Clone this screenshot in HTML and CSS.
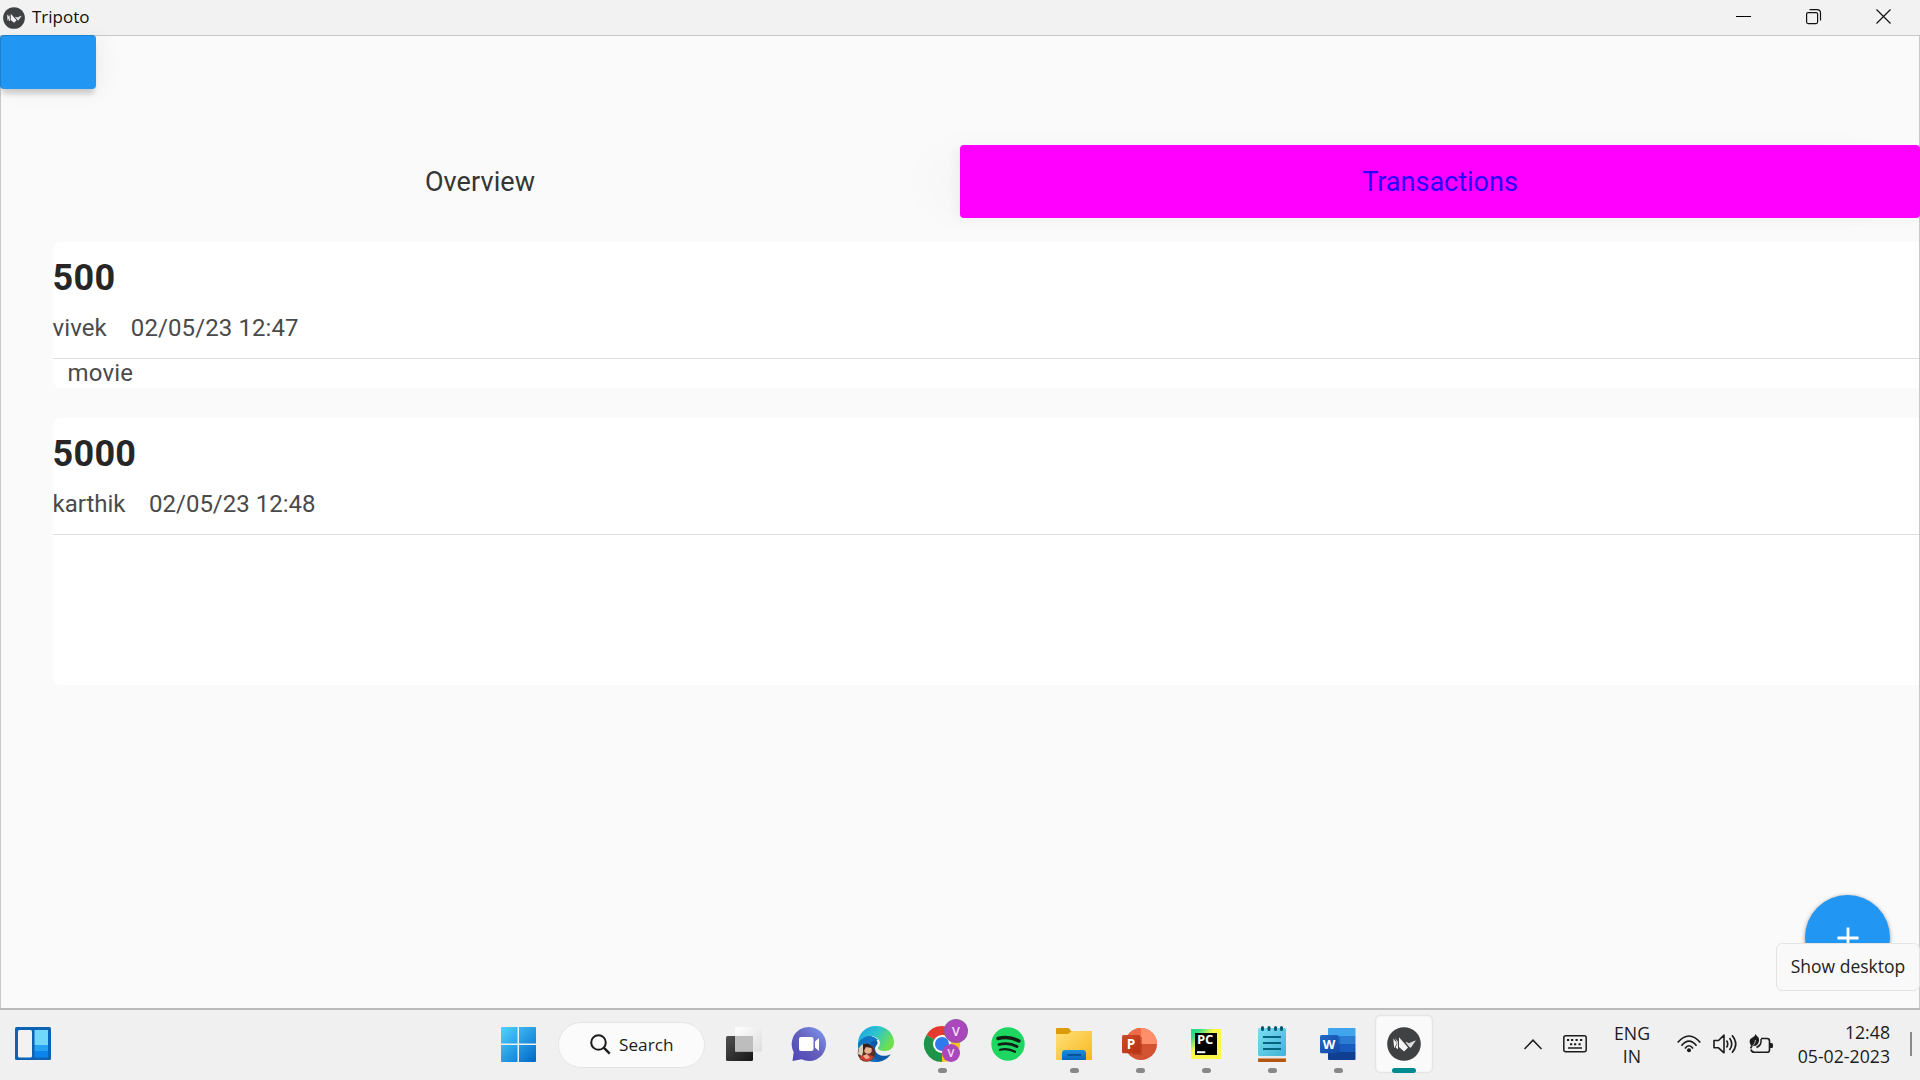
FILE: index.html
```html
<!DOCTYPE html>
<html lang="en">
<head>
<meta charset="utf-8">
<title>Tripoto</title>
<link rel="stylesheet" href="styles.css">
</head>
<body>
<svg width="0" height="0" class="defs">
  <defs>
    <symbol id="kivy" viewBox="0 0 34 34">
      <circle cx="17" cy="17" r="16.8" fill="#404143"/>
      <path d="M6.2 11.5L10 16l-2.8 5.2zM8 11l2.8 3.6.2 7.6-2.4-1.6 1.7-4.4zM12 10.3l9 10.2-3.9 4-5.1-4.6zM18.600 15l3.400 1.200 6.800-2.700-5.100 7.200-1.200-.8z" fill="#f4f4f4"/>
      <path d="M18.600 15l3.400 1.200 6.800-2.700-6.300 6.400z" fill="#d5d5d5"/>
    </symbol>
    <linearGradient id="win" x1="0" y1="0" x2="1" y2="1"><stop offset="0" stop-color="#4fd3ff"/><stop offset="1" stop-color="#0067c8"/></linearGradient>
    <linearGradient id="dark" x1="0" y1="0" x2="1" y2="1"><stop offset="0" stop-color="#505050"/><stop offset="1" stop-color="#161616"/></linearGradient>
    <linearGradient id="light" x1="0" y1="0" x2="1" y2="1"><stop offset="0" stop-color="#ffffff"/><stop offset="1" stop-color="#dedede"/></linearGradient>
    <linearGradient id="chat" x1="0" y1="1" x2="1" y2="0"><stop offset="0" stop-color="#4a45b5"/><stop offset=".5" stop-color="#6660bd"/><stop offset="1" stop-color="#7f9df5"/></linearGradient>
    <linearGradient id="edgeTop" x1="0" y1="0" x2="1" y2=".5"><stop offset="0" stop-color="#1b9de2"/><stop offset=".5" stop-color="#2bc3d2"/><stop offset="1" stop-color="#6fe04c"/></linearGradient>
    <linearGradient id="folder" x1="0" y1="0" x2="1" y2="1"><stop offset="0" stop-color="#ffe07a"/><stop offset="1" stop-color="#f8b81e"/></linearGradient>
    <linearGradient id="blue" x1="0" y1="0" x2="0" y2="1"><stop offset="0" stop-color="#1c8fe0"/><stop offset="1" stop-color="#0b66bd"/></linearGradient>
    <linearGradient id="red" x1="0" y1="0" x2="1" y2="1"><stop offset="0" stop-color="#ce4a2b"/><stop offset="1" stop-color="#b5310f"/></linearGradient>
    <linearGradient id="pc" x1="0" y1="0" x2="1" y2="1"><stop offset="0" stop-color="#21d789"/><stop offset=".16" stop-color="#35dc86"/><stop offset=".4" stop-color="#fcf84a"/><stop offset="1" stop-color="#fcf84a"/></linearGradient>
    <linearGradient id="note" x1="0" y1="0" x2="1" y2="1"><stop offset="0" stop-color="#7fdcf5"/><stop offset="1" stop-color="#3fb4d4"/></linearGradient>
    <linearGradient id="word" x1="0" y1="0" x2="1" y2="1"><stop offset="0" stop-color="#2368c9"/><stop offset="1" stop-color="#1149a5"/></linearGradient>
  </defs>
</svg>

<header class="titlebar">
  <svg class="app-icon" width="22" height="22"><use href="#kivy"/></svg>
  <span class="app-name">Tripoto</span>
  <div class="window-controls">
    <svg width="16" height="16"><path d="M0 7.500h15" stroke="#000"/></svg>
    <svg width="16" height="16" fill="none" stroke="#111" stroke-width="1.200"><rect x=".6" y="3.600" width="11" height="11" rx="1.500"/><path d="M3.500.6H11Q14.500.6 14.500 4v7.500"/></svg>
    <svg width="16" height="16"><path d="M.5.5l14 14M14.500.5l-14 14" stroke="#111" stroke-width="1.200"/></svg>
  </div>
</header>

<main class="window">
  <button class="menu-button" aria-label="Menu"></button>
  <nav class="tabs">
    <button class="tab">Overview</button>
    <button class="tab active">Transactions</button>
  </nav>
  <section class="transactions">
    <article class="card">
      <h2 class="amount">500</h2>
      <p class="meta"><span>vivek</span><span>02/05/23 12:47</span></p>
      <p class="note">movie</p>
    </article>
    <article class="card tall">
      <h2 class="amount">5000</h2>
      <p class="meta"><span>karthik</span><span>02/05/23 12:48</span></p>
      <p class="note"></p>
    </article>
  </section>
  <button class="fab" aria-label="Add"><svg width="22" height="22"><path d="M11 .5v21M.5 11h21" stroke="#fff" stroke-width="2.800"/></svg></button>
  <div class="tooltip">Show desktop</div>
</main>

<footer class="taskbar">
  <div class="widgets">
    <svg width="36" height="34"><rect width="36" height="33" rx="1.500" fill="#0d62b3"/><rect x="3" y="3" width="14" height="27.500" rx="1.500" fill="#f2f2f2"/><path d="M19.500 3H33v15H19.500z" fill="#6fd8fb"/><path d="M19.500 18H33v6H19.500z" fill="#25a2f1"/><path d="M19.500 24H33v6.500H19.500z" fill="#0c83ea"/></svg>
  </div>
  <div class="apps">
    <svg class="start" width="35" height="35" fill="url(#win)"><path d="M1 0h15.500v16.500H0V1q0-1 1-1zM18 0h16q1 0 1 1v15.500H18zM0 18h16.500v17H1q-1 0-1-1zM18 18h17v16q0 1-1 1H18z"/></svg>
    <div class="search">
      <svg width="21" height="21" fill="none" stroke="#1c1c1c" stroke-width="2"><circle cx="8.500" cy="8.500" r="7.300"/><path d="M13.700 13.700l6 6" stroke-width="2.400"/></svg>
      <span>Search</span>
    </div>
    <svg class="app" viewBox="0 0 66 70"><rect x="15" y="26" width="27" height="25" rx="1.500" fill="url(#dark)"/><rect x="24" y="17" width="27" height="24.500" rx="1" fill="url(#light)"/><path d="M24 26h18v15.500H24z" fill="#bdbdbd"/></svg>
    <svg class="app" viewBox="0 0 66 70"><path d="M32 17a17 17 0 1 1-7.500 32.200L15.500 51l1.200-9A17 17 0 0 1 32 17z" fill="url(#chat)"/><rect x="22" y="27" width="14.500" height="14" rx="2" fill="#fff"/><path d="M38 31.500l4-3.500v13l-4-3.500z" fill="#fff"/></svg>
    <svg class="app" viewBox="0 0 66 70">
      <path d="M15 34a18 18 0 0 0 33 10c-4 3-15 3-16-5 0-4 4-4 2-8C31 24 18 24 15 34z" fill="#0d5ba8"/>
      <path d="M15 34C15 23 23 16 33 16c11 0 18 8 18 16 0 6-4 9-9 9-4 0-7-1-7-3 0-1 2-2 2-5 0-3-4-7-9-7-6 0-10 3-13 8z" fill="url(#edgeTop)"/>
      <path d="M15 34c3-8 15-10 20-4-6-1-10 5-8 11 1 4 4 8 8 10-12 3-20-7-20-17z" fill="#1275c4"/>
      <circle cx="23.500" cy="43" r="8.800" fill="#5b302b"/>
      <path d="M16 38q3-5 8-4l-3 4-2 8-4-2z" fill="#d7cdb6"/><circle cx="25" cy="40" r="3.800" fill="#e7b18e"/><path d="M20 34q7-2 9 4l-6-1-3 5z" fill="#38201d"/><path d="M16.500 47q7-5 14.500 0a8.800 8.800 0 0 1-13 2z" fill="#d33c30"/><path d="M20 46l4-2 3 4-4 1z" fill="#efb092"/>
    </svg>
    <svg class="app" viewBox="0 0 66 70">
      <path d="M33 34L17.400 25a18 18 0 0 1 31.200 0z" fill="#e33b2e"/><path d="M33 34l-15.600-9A18 18 0 0 0 33 52l6-9z" fill="#1f9347"/><path d="M33 34v18a18 18 0 0 0 15.600-27H33z" fill="#fdc21b"/>
      <circle cx="33" cy="34" r="9" fill="#fff"/><circle cx="33" cy="34" r="7" fill="#2f7bed"/>
      <circle cx="47" cy="21" r="12" fill="#8d5aa0"/><circle cx="47" cy="21" r="11" fill="#ab47bc"/><text x="47" y="25.500" class="glyph soft" font-size="12.500">V</text>
      <circle cx="42" cy="43" r="9" fill="#ab47bc"/><text x="42" y="47" class="glyph soft" font-size="11">V</text>
      <rect x="29" y="58" width="9" height="5" rx="2.500" fill="#888"/>
    </svg>
    <svg class="app" viewBox="0 0 66 70"><circle cx="33" cy="34" r="16.700" fill="#1ed760"/><g fill="none" stroke="#0f2016" stroke-linecap="round"><path d="M23 28.500q11-3 21 2.500" stroke-width="3.400"/><path d="M24 34.500q10-2.500 18 2" stroke-width="2.800"/><path d="M25 39.800q8-2 15 2" stroke-width="2.200"/></g></svg>
    <svg class="app" viewBox="0 0 66 70"><path d="M15 19q0-1 1-1h11q1.500 0 3 3h20q1 0 1 1v5H15z" fill="#dc9c0a"/><path d="M15 24h12l4-3h19q1 0 1 1v28H15z" fill="url(#folder)"/><path d="M21 50v-7q0-3 3-3h18q3 0 3 3v7z" fill="url(#blue)"/><path d="M26.500 45H40" stroke="#07539a" stroke-width="2"/><rect x="29" y="58" width="9" height="5" rx="2.500" fill="#888"/></svg>
    <svg class="app" viewBox="0 0 66 70"><circle cx="34" cy="34" r="16" fill="#d35230"/><path d="M34 34V18a16 16 0 0 1 16 16z" fill="#ff8f6b"/><path d="M34 34V18a16 16 0 0 0-16 16z" fill="#ed6c47"/><path d="M26 27h9v18h-9z" fill="#a83a20" opacity=".5"/><rect x="15" y="25" width="18.300" height="18.300" rx="1.500" fill="url(#red)"/><text x="24" y="38.800" class="glyph" font-size="13.500">P</text><rect x="29" y="58" width="9" height="5" rx="2.500" fill="#888"/></svg>
    <svg class="app" viewBox="0 0 66 70"><path d="M18 19h30v30H18z" fill="url(#pc)"/><path d="M22 23h22v22H22z" fill="#000"/><text x="32.200" y="34" class="glyph" font-size="11.500" textLength="16.500" lengthAdjust="spacingAndGlyphs">PC</text><path d="M24 42.200h8.300" stroke="#fff" stroke-width="2"/><rect x="29" y="58" width="9" height="5" rx="2.500" fill="#888"/></svg>
    <svg class="app" viewBox="0 0 66 70"><rect x="19" y="46" width="28" height="3" fill="#e9e9e9"/><path d="M19 48.500h28V51q0 1-1 1H20q-1 0-1-1z" fill="#b3540f"/><rect x="19" y="18" width="28" height="28" rx="1.500" fill="url(#note)"/><path d="M23.500 17.500v2M30 17.500v2M36.500 17.500v2M42.500 17.500v2" stroke="#06586e" stroke-width="3" stroke-linecap="round"/><path d="M24 27h18M24 33h18M24 39h18" stroke="#05657f" stroke-width="2"/><rect x="29" y="58" width="9" height="5" rx="2.500" fill="#888"/></svg>
    <svg class="app" viewBox="0 0 66 70"><path d="M23 19q0-1 1-1h25.500q1 0 1 1v7H23z" fill="#41a5ee"/><path d="M23 26h27.500v8H23z" fill="#2b7cd3"/><path d="M23 34h27.500v8H23z" fill="#185abd"/><path d="M23 42h27.500v7q0 1-1 1H24q-1 0-1-1z" fill="#103f91"/><path d="M23 27h12v18H23z" fill="#103f91" opacity=".35"/><rect x="15" y="25" width="18.300" height="18.300" rx="1.500" fill="url(#word)"/><text x="24.100" y="38.800" class="glyph" font-size="13">W</text><rect x="29" y="58" width="9" height="5" rx="2.500" fill="#888"/></svg>
    <svg class="app" viewBox="0 0 66 70"><rect x="4.500" y="5.500" width="57" height="57" rx="5" fill="#fafafa" stroke="#e5e5e5" stroke-width="1.500"/><use href="#kivy" x="16" y="17" width="34" height="34"/><rect x="21" y="58" width="24" height="5" rx="2.500" fill="#038b92"/></svg>
  </div>
  <div class="tray">
    <svg class="chevron" width="18" height="11" fill="none" stroke="#1c1c1c" stroke-width="1.500"><path d="M.5 10L9 1.200l8.500 8.800"/></svg>
    <svg class="keyboard" width="24" height="18" fill="none" stroke="#1c1c1c" stroke-width="1.500"><rect x=".8" y=".8" width="22.400" height="16" rx="2"/><path d="M4 5h2.200M8 5h2.200M12.500 5h2.200M17 5h2.200M7 9.300h2.200M11 9.300h2.200M15.500 9.300h2.200" stroke-width="2"/><path d="M5 13h14"/></svg>
    <div class="language">ENG<br>IN</div>
    <svg class="status" width="24" height="18" fill="none" stroke="#1c1c1c" stroke-width="1.700"><path d="M.7 7.500q11.300-13 22.600 0M4.500 10.700q7.500-9 15 0M8 13.500q4-5.500 8 0"/><circle cx="12" cy="15.300" r="2" fill="#1c1c1c" stroke="none"/></svg>
    <svg class="status" width="24" height="20" fill="none" stroke="#1c1c1c" stroke-width="1.600" stroke-linejoin="round"><path d="M1 6.500h4.500L11 1.200v17.600l-5.500-5H1z"/><path d="M13.500 6.500q2.500 3.500 0 7M16.500 4q4.500 6 0 12M19 1.200q7.500 8.800 0 17.600"/></svg>
    <svg class="status" width="24" height="20"><path d="M6.500 0q1.500 2.500 3 3.500 1.500 4-1 7-2 2-4.500 1.500L2 15l-1-1.200 1-2.300Q-1.500 5.500 3.500 3.500 6 2.500 6.500 0z" fill="#1c1c1c"/><path d="M12 4.500h6q2.500 0 2.500 2.500v9q0 2.300-2.500 2.300H5.500q-3 0-3.500-2.800" fill="none" stroke="#1c1c1c" stroke-width="1.600"/><path d="M12 5q1 6-4.500 8.500" stroke="#1c1c1c" stroke-width="1.500" fill="none"/><path d="M21 9h1.500q1.500 0 1.500 1.500v2q0 1.500-1.500 1.500H21z" fill="#1c1c1c"/><path d="M6.500 6q0 4-3.500 6.500" stroke="#ddd" fill="none" stroke-width=".8"/></svg>
    <div class="clock">12:48<br>05-02-2023</div>
    <div class="show-desktop"></div>
  </div>
</footer>
</body>
</html>
```
FILE: styles.css
```css
* { box-sizing: border-box; }
body {
  margin: 0;
  width: 1920px;
  height: 1080px;
  overflow: hidden;
  display: grid;
  grid-template-rows: 35px 973px 72px;
  background: #fafafa;
  font-family: "Open Sans", "Noto Sans", sans-serif;
}
.defs { position: absolute; }
h2, p { margin: 0; }
button { border: 0; padding: 0; font: inherit; }
svg { display: block; flex: none; }

.titlebar {
  display: flex;
  align-items: center;
  padding: 0 28px 0 3px;
  background: #f2f2f2;
}
.app-name { margin-left: 7px; font-size: 17px; line-height: 32px; padding-bottom: 2px; color: #111; }
.window-controls { display: flex; gap: 54px; margin-left: auto; padding-bottom: 1px; }

.window {
  position: relative;
  border: 1px solid #c8c8c8;
  border-bottom: 0;
  font-family: Roboto, sans-serif;
}
.menu-button {
  display: block;
  width: 96px;
  height: 54px;
  margin: -1px 0 0 -1px;
  border-radius: 4px;
  background: #2196f3;
  border-left: 1px solid #1d80cc;
  border-top: 1px solid #1d80cc;
  box-shadow: 0 7px 5px -2px #0000002a, 6px 3px 22px #0000000d;
}
.tabs {
  display: grid;
  grid-template-columns: 1fr 1fr;
  height: 73px;
  margin: 55.500px -1px 0;
}
.tab { padding-top: 2px; background: transparent; color: #353535; font-size: 27px; letter-spacing: .1px; }
.tab.active {
  border-radius: 4px;
  background: #f0f;
  color: #2a00ff;
  letter-spacing: 0;
  box-shadow: -4px 2px 12px #0000000a, -40px 0 50px -10px #00000006;
}
.transactions {
  display: flex;
  flex-direction: column;
  gap: 30px;
  margin: 24.500px 0 0 51.500px;
}
.card {
  height: 146px;
  padding-top: 15px;
  border-radius: 8px 0 0 8px;
  background: #fff;
  color: #4a4a4a;
  font-size: 24px;
}
.card.tall { height: 267px; }
.amount { color: #262626; font-size: 36px; line-height: 42px; font-weight: 700; letter-spacing: .3px; }
.meta {
  display: flex;
  gap: 24px;
  height: 60px;
  padding-top: 15px;
  line-height: 28px;
  letter-spacing: .1px;
  border-bottom: 1.500px solid #dfdfdf;
}
.tall .meta { gap: 23.500px; letter-spacing: 0; }
.note { padding-left: 15px; line-height: 28px; letter-spacing: .2px; }

.fab {
  position: absolute;
  right: 29px;
  bottom: 28px;
  width: 85px;
  height: 85px;
  display: grid;
  place-items: center;
  border-radius: 50%;
  background: #2196f3;
  box-shadow: 0 1px 4px #00000066;
}
.tooltip {
  position: absolute;
  right: -1px;
  bottom: 17px;
  width: 144px;
  height: 48px;
  border: 1.500px solid #e4e4e4;
  border-radius: 6px;
  background: #f9f9f9;
  color: #222;
  font: 17.500px/44px "Open Sans", sans-serif;
  text-align: center;
}

.taskbar {
  display: grid;
  grid-template-columns: 501px 936px 1fr;
  align-items: center;
  border-top: 2px solid #bababa;
  background: #f0f0f0;
  color: #1b1b1b;
  font-size: 17.700px;
}
.widgets { padding-left: 15px; }
.widgets svg { margin-bottom: 2px; }
.apps { display: flex; align-items: center; height: 70px; }
.start { margin: 0 22px 1px 0; }
.search {
  display: flex;
  align-items: center;
  gap: 8px;
  width: 147px;
  height: 46px;
  margin: 0 6px 1px 0;
  padding-left: 31px;
  border: 1.500px solid #e5e5e5;
  border-radius: 23px;
  background: #fbfbfb;
}
.search span { line-height: 24px; font-size: 17.200px; }
.app { width: 66px; height: 70px; }
.glyph { fill: #fff; font-family: "Open Sans", sans-serif; font-weight: 700; text-anchor: middle; }
.glyph.soft { fill: #f3e3f6; font-weight: 600; }
.tray { display: flex; align-items: center; padding-left: 87px; height: 70px; gap: 12px; }
.chevron, .status { margin-bottom: 2px; }
.keyboard { margin: 0 0 2px 9px; }
.language { width: 66px; text-align: center; line-height: 23px; padding-bottom: 1px; }
.clock { width: 105px; text-align: right; line-height: 24px; padding-bottom: 3px; }
.show-desktop { width: 2px; height: 24px; margin-left: 8px; margin-bottom: 2px; background: #8a8a8a; }
```
